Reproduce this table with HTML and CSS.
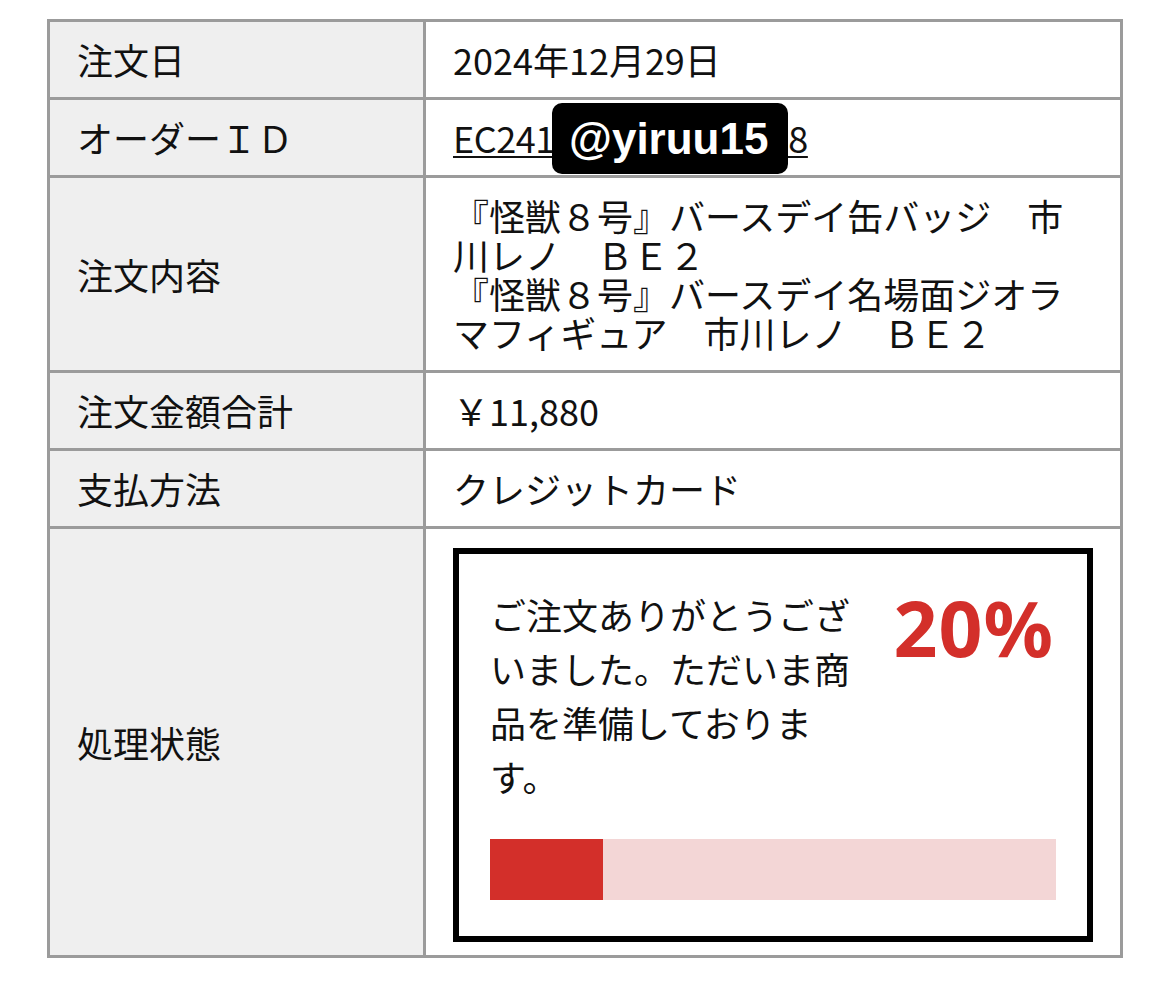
FILE: index.html
```html
<!DOCTYPE html>
<html lang="ja">
<head>
<meta charset="utf-8">
<title>注文詳細</title>
<link rel="stylesheet" href="styles.css">
</head>
<body>
<div class="order">
  <div class="label">注文日</div>
  <div class="value">2024年12月29日</div>

  <div class="label">オーダーＩＤ</div>
  <div class="value">
    <span class="id-wrap">
      <a class="order-id" href="#">EC2412291053720718</a>
      <span class="badge">@yiruu15</span>
    </span>
  </div>

  <div class="label">注文内容</div>
  <div class="value">『怪獣８号』バースデイ缶バッジ　市川レノ　ＢＥ２<br>『怪獣８号』バースデイ名場面ジオラマフィギュア　市川レノ　ＢＥ２</div>

  <div class="label">注文金額合計</div>
  <div class="value">￥11,880</div>

  <div class="label">支払方法</div>
  <div class="value">クレジットカード</div>

  <div class="label">処理状態</div>
  <div class="value value-status">
    <div class="status">
      <div class="status-top">
        <p class="status-msg">ご注文ありがとうございました。ただいま商品を準備しております。</p>
        <span class="status-pct">20%</span>
      </div>
      <div class="bar"><div class="bar-fill" style="width:20%"></div></div>
    </div>
  </div>
</div>
</body>
</html>
```

FILE: styles.css
```css
html, body {
  margin: 0;
  padding: 0;
  background: #ffffff;
}

body {
  font-family: "Noto Sans CJK JP", "Noto Sans", sans-serif;
  color: #111111;
  padding: 19px 0 0 47px;
}

.order {
  display: grid;
  grid-template-columns: 373px 694px;
  gap: 3px;
  width: max-content;
  background: #9b9b9b;
  border: 3px solid #9b9b9b;
}

.label,
.value {
  font-size: 36px;
  line-height: 39px;
  padding: 18px 27px;
}

.label {
  background: #efefef;
  display: flex;
  align-items: center;
}

.value {
  background: #ffffff;
}

.id-wrap {
  position: relative;
  display: inline-block;
}

.order-id {
  color: #111111;
  letter-spacing: -0.5px;
  text-decoration: underline;
  text-decoration-thickness: 2px;
  text-underline-offset: 3px;
}

.badge {
  position: absolute;
  left: 99px;
  top: -15px;
  width: 236px;
  height: 71px;
  background: #000000;
  border-radius: 10px;
  color: #ffffff;
  font-family: "Liberation Sans", Arial, sans-serif;
  font-weight: 700;
  font-size: 44px;
  line-height: 71px;
  padding-left: 17px;
  box-sizing: border-box;
}

.value-status {
  padding-top: 19px;
  padding-bottom: 13px;
}

.status {
  border: 6px solid #000000;
  padding: 33px 31px 36px 31px;
  display: flex;
  flex-direction: column;
  gap: 36px;
}

.status-top {
  display: flex;
  align-items: flex-start;
  justify-content: space-between;
  gap: 36px;
}

.status-msg {
  margin: 0;
  flex: 1;
  font-size: 36px;
  line-height: 54px;
}

.status-pct {
  font-family: "Noto Sans", "Open Sans", sans-serif;
  font-weight: 700;
  font-size: 77px;
  line-height: 77px;
  letter-spacing: 1px;
  color: #d32f2a;
  margin-top: 2px;
  margin-right: 2px;
}

.bar {
  height: 61px;
  background: #f3d6d6;
}

.bar-fill {
  height: 100%;
  background: #d32f2a;
}
```
